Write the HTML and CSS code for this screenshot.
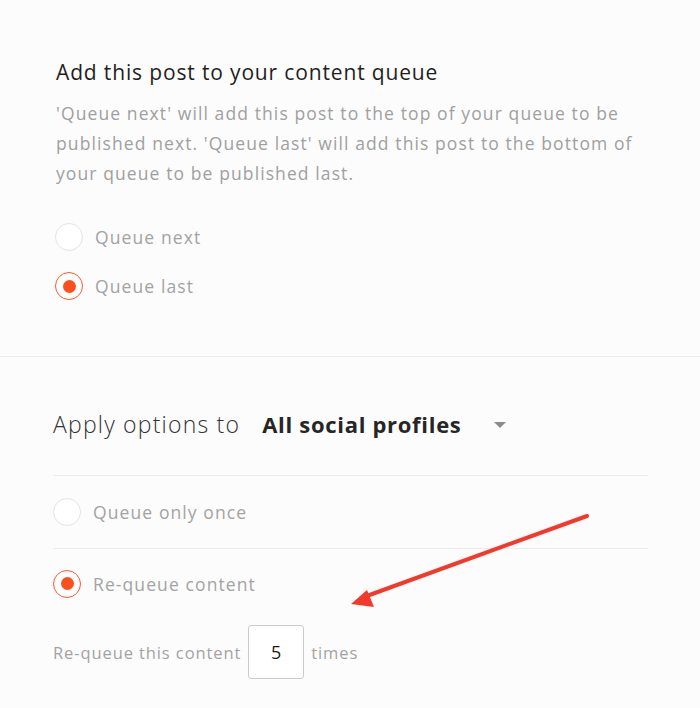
FILE: index.html
```html
<!DOCTYPE html>
<html lang="en">
<head>
  <meta charset="UTF-8" />
  <title>Queue options</title>
  <link rel="stylesheet" href="styles.css">
</head>
<body>

  <div class="queue-section">
    <h2>Add this post to your content queue</h2>
    <p class="desc">'Queue next' will add this post to the top of your queue to be published next. 'Queue last' will add this post to the bottom of your queue to be published last.</p>
    <div class="radio-row">
      <span class="radio"></span>
      <span class="label">Queue next</span>
    </div>
    <div class="radio-row">
      <span class="radio checked"></span>
      <span class="label">Queue last</span>
    </div>
  </div>

  <div class="options-section">
    <div class="apply-row">
      <span class="apply-label">Apply options to</span>
      <span class="apply-value">All social profiles</span>
      <span class="caret"></span>
    </div>
    <div class="option-row">
      <span class="radio"></span>
      <span class="label">Queue only once</span>
    </div>
    <div class="option-row last">
      <span class="radio checked"></span>
      <span class="label">Re-queue content</span>
    </div>
    <div class="times-row">
      <span class="label small">Re-queue this content</span>
      <input type="text" class="times-input" value="5">
      <span class="label small">times</span>
    </div>
  </div>

  <svg class="annotation" width="260" height="110" viewBox="0 0 260 110">
    <line x1="247" y1="11" x2="24" y2="92" stroke="#f2392b" stroke-width="4" stroke-linecap="round"/>
    <polygon points="11,99 27,85 34,102" fill="#f2392b"/>
  </svg>

</body>
</html>
```

FILE: styles.css
```css
* {
  margin: 0;
  padding: 0;
  box-sizing: border-box;
}

body {
  background: #fcfcfc;
  font-family: 'Open Sans', 'Noto Sans', sans-serif;
  position: relative;
  min-height: 708px;
}

.queue-section {
  padding: 58px 40px 56px 55px;
  border-bottom: 1px solid #ebebeb;
}

.queue-section h2 {
  font-size: 21px;
  font-weight: 400;
  line-height: 28px;
  letter-spacing: 0.85px;
  color: #1f1f1f;
  padding-left: 1px;
}

.desc {
  margin-top: 12px;
  font-size: 17.5px;
  line-height: 30px;
  letter-spacing: 1.1px;
  color: #a0a0a0;
  padding-left: 1px;
}

.radio-row {
  display: flex;
  align-items: center;
  gap: 12px;
  height: 28px;
  margin-top: 21px;
}

.radio-row:first-of-type {
  margin-top: 35px;
}

.radio {
  width: 28px;
  height: 28px;
  border-radius: 50%;
  border: 1px solid #e3e3e3;
  background: #ffffff;
  flex-shrink: 0;
  display: flex;
  align-items: center;
  justify-content: center;
}

.radio.checked {
  border: 1.5px solid #fa5a2d;
}

.radio.checked::after {
  content: "";
  width: 13px;
  height: 13px;
  border-radius: 50%;
  background: #fb4f1e;
}

.label {
  font-size: 17.5px;
  letter-spacing: 1.1px;
  color: #a3a3a3;
}

.options-section {
  padding: 51px 52px 0 53px;
}

.apply-row {
  display: flex;
  align-items: center;
  height: 32px;
  margin-bottom: 35px;
}

.apply-label {
  font-size: 23px;
  font-weight: 300;
  color: #333333;
  letter-spacing: 1.2px;
}

.apply-value {
  font-size: 22px;
  font-weight: 700;
  color: #262626;
  letter-spacing: 0.7px;
  margin-left: 22px;
}

.caret {
  width: 0;
  height: 0;
  border-left: 6px solid transparent;
  border-right: 6px solid transparent;
  border-top: 6px solid #8c8c8c;
  margin-left: 33px;
  margin-top: 2px;
}

.option-row {
  display: flex;
  align-items: center;
  gap: 12px;
  height: 73px;
  border-top: 1px solid #ececec;
}

.option-row.last {
  height: 70px;
}

.times-row {
  display: flex;
  align-items: center;
  gap: 7px;
  height: 68px;
}

.label.small {
  font-size: 16.5px;
  letter-spacing: 0.9px;
}

.times-input {
  width: 56px;
  height: 54px;
  border: 1px solid #cccccc;
  border-radius: 3px;
  background: #ffffff;
  font-family: 'Open Sans', 'Noto Sans', sans-serif;
  font-size: 18px;
  color: #1a1a1a;
  text-align: center;
}

.annotation {
  position: absolute;
  left: 340px;
  top: 505px;
}
```
